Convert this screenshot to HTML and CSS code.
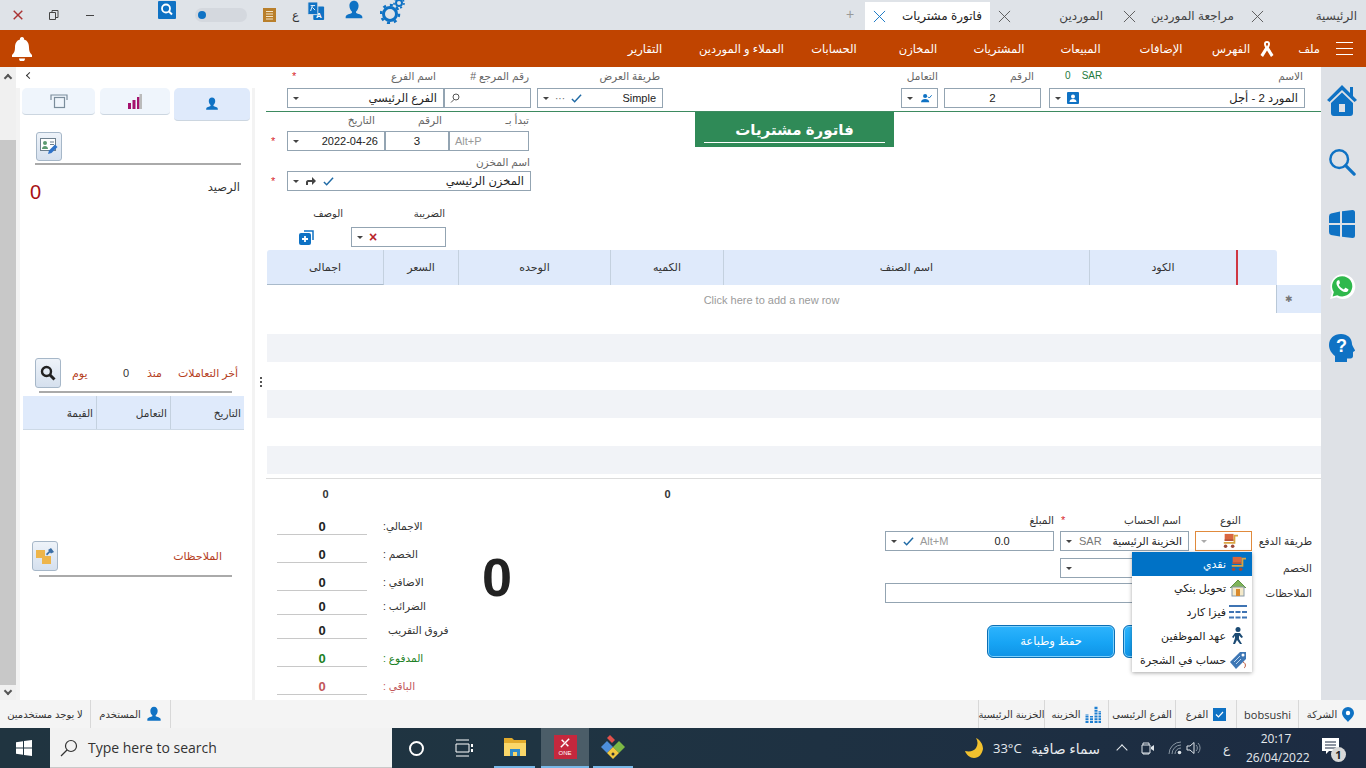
FILE: index.html
```html
<!DOCTYPE html>
<html lang="ar">
<head>
    <meta charset="UTF-8">
    <title>فاتورة مشتريات</title>
    <link rel="stylesheet" href="styles.css">
</head>
<body>
<svg class="defs">
    <symbol id="i-user" viewBox="0 0 24 24"><path d="M12 1c3.400 0 5.500 2.600 5.500 6 0 3-1.300 5.500-3 6.800v1.700c2 1.200 7 1.600 7.500 4.500v2H2v-2c.5-2.900 5.500-3.300 7.500-4.500v-1.700c-1.700-1.300-3-3.800-3-6.800 0-3.400 2.100-6 5.500-6z"/></symbol>
    <symbol id="i-check" viewBox="0 0 12 12"><path d="M1 6.500l3 3L11 2" fill="none" stroke="currentColor" stroke-width="1.600"/></symbol>
    <symbol id="i-x" viewBox="0 0 14 14"><path d="M1 1l12 12M13 1L1 13" fill="none" stroke="currentColor"/></symbol>
    <symbol id="i-cart" viewBox="0 0 20 18"><path fill="#d9663f" d="M4 1h10v8H4z"/><path fill="#b9543a" d="M4 7h10v2H4z"/><path fill="#d9a441" d="M14 2h5v2h-3v8H3v-2h11z"/><circle cx="5" cy="15" r="2" fill="#9c4a3a"/><circle cx="13" cy="15" r="2" fill="#9c4a3a"/></symbol>
</svg>

<!-- شريط التبويبات -->
<div class="titlebar">
    <div class="winbtn win-close"><svg width="10" height="10"><use href="#i-x"/></svg></div>
    <div class="winbtn"><svg width="10" height="10" viewBox="0 0 10 10"><path d="M3 2.500V.5h6v7H7M.5 2.500h6v7h-6z" fill="none" stroke="#444"/></svg></div>
    <div class="winbtn"><span class="win-min"></span></div>
    <svg class="t-search" width="18" height="18" viewBox="0 0 18 18"><rect width="18" height="18" rx="1" fill="#0f72c4"/><circle cx="8" cy="7.500" r="4" fill="none" stroke="#fff" stroke-width="1.800"/><path d="M11 10.500l3 3" stroke="#fff" stroke-width="2"/></svg>
    <div class="toggle"><span></span></div>
    <svg class="t-notes" width="13" height="14" viewBox="0 0 13 14"><rect width="13" height="14" fill="#b97f2b"/><path d="M3 3.500h7M3 6h7M3 8.500h7M3 11h7" stroke="#f3e4c6"/></svg>
    <span class="t-lang">ع</span>
    <svg class="t-trans" width="18" height="18" viewBox="0 0 18 20"><rect x="6" y="5" width="12" height="15" rx="1" fill="#0f72c4"/><rect width="11" height="14" rx="1" fill="#0f72c4" stroke="#dfe3e8"/><path d="M3 4h5M5 4l-2 6M5 6l3 3" stroke="#fff" fill="none"/><text x="9" y="18" class="t-trans-a">A</text></svg>
    <svg class="t-user" width="20" height="20"><use href="#i-user"/></svg>
    <svg class="t-gear" width="25" height="26" viewBox="0 0 25 26"><circle cx="10" cy="16" r="6.500" fill="none" stroke="#0f72c4" stroke-width="3"/><circle cx="10" cy="16" r="9" fill="none" stroke="#0f72c4" stroke-width="2.500" stroke-dasharray="3 4"/><circle cx="19" cy="5" r="3" fill="none" stroke="#0f72c4" stroke-width="2"/><circle cx="19" cy="5" r="5" fill="none" stroke="#0f72c4" stroke-width="1.600" stroke-dasharray="2 2.500"/></svg>

    <div class="tabs">
        <span class="tab-plus">+</span>
        <div class="tab tab-active"><svg class="tab-x" width="13" height="13"><use href="#i-x"/></svg><span>فاتورة مشتريات</span></div>
        <div class="tab tab-sup"><svg class="tab-x" width="13" height="13"><use href="#i-x"/></svg><span>الموردين</span></div>
        <div class="tab"><svg class="tab-x" width="13" height="13"><use href="#i-x"/></svg><span>مراجعة الموردين</span></div>
        <div class="tab tab-home"><svg class="tab-x" width="13" height="13"><use href="#i-x"/></svg><span>الرئيسية</span></div>
    </div>
</div>

<!-- القائمة -->
<div class="menubar">
    <svg class="bell" width="22" height="24" viewBox="0 0 22 24"><path fill="#fff" d="M11 0a2 2 0 0 1 2 2.500c3.600 1 5 4 5 8 0 4 1 5.500 3 7.500v2H1v-2c2-2 3-3.500 3-7.500 0-4 1.400-7 5-8A2 2 0 0 1 11 0zM8 21.500h6a3 3 0 0 1-6 0z"/></svg>
    <div class="menu">
        <span>التقارير</span>
        <span>العملاء و الموردين</span>
        <span>الحسابات</span>
        <span>المخازن</span>
        <span>المشتريات</span>
        <span>المبيعات</span>
        <span>الإضافات</span>
        <span>الفهرس</span>
        <svg width="14" height="18" viewBox="0 0 14 18"><path d="M7 1c2 0 3 1 3 3 0 1-.6 2.400-1.200 3.500L13.500 15l-2.500 2L7 10.500 3 17 .5 15l4.700-7.500C4.600 6.400 4 5 4 4c0-2 1-3 3-3zm0 2c-.8 0-1.100.5-1.100 1.100 0 .5.500 1.500 1.100 2.500.6-1 1.100-2 1.100-2.500C8.100 3.500 7.800 3 7 3z" fill="#fff"/></svg>
        <span class="m-file">ملف</span>
        <div class="burger"><i></i><i></i><i></i></div>
    </div>
</div>

<div class="main">
    <!-- الشريط الايسر -->
    <div class="scroller">
        <span class="sc-up"></span>
        <div class="sc-thumb"></div>
        <span class="sc-down"></span>
    </div>

    <div class="leftpanel">
        <div class="lp-top"><span class="lp-arrow"></span></div>
        <div class="lp-body">
            <div class="lp-tabs">
                <div class="lp-tab"><svg width="20" height="16" viewBox="0 0 20 16"><path d="M2 7V2h16v5" fill="none" stroke="#7b8d9c" stroke-width="1.200"/><rect x="5.500" y="4.500" width="10" height="10" fill="#eff5fc" stroke="#7b8d9c" stroke-width="1.200"/></svg></div>
                <div class="lp-tab lp-tab2"><svg width="16" height="15" viewBox="0 0 16 15"><path fill="#a5116e" d="M1 9h3v6H1zM5.500 6h3v9h-3zM10 3h2.500v12H10z"/><path fill="#bbb" d="M12.500 0H15v15h-2.500z"/></svg></div>
                <div class="lp-tab lp-tab-active"><svg width="14" height="14"><use href="#i-user"/></svg></div>
            </div>
            <div class="lp-btnrow">
                <div class="sq-btn"><svg width="18" height="17" viewBox="0 0 18 17"><rect x="0.500" y="0.500" width="15" height="12" fill="#fff" stroke="#6d7f8d"/><circle cx="5" cy="5" r="2" fill="#5c9a70"/><path fill="#5c9a70" d="M2 11c0-2 1.500-3 3-3s3 1 3 3z"/><path d="M10 4h4M10 6.500h4" stroke="#6d7f8d"/><path fill="#2f73c9" d="M8 16l1-3.500 6-6 2.500 2.500-6 6z"/></svg></div>
            </div>
            <div class="lp-line lp-line-wide"></div>
            <div class="balance">
                <span class="balance-val">0</span>
                <span class="balance-lbl">الرصيد</span>
            </div>
            <div class="recent">
                <div class="sq-btn sq-btn-tall"><svg width="16" height="16" viewBox="0 0 16 16"><circle cx="6.500" cy="6.500" r="4.500" fill="none" stroke="#222" stroke-width="2.400"/><path d="M10 10l4.500 4.500" stroke="#222" stroke-width="3"/></svg></div>
                <span class="rc-day">يوم</span>
                <span class="rc-num">0</span>
                <span class="rc-since">منذ</span>
                <span class="rc-title">أخر التعاملات</span>
            </div>
            <div class="lp-line"></div>
            <div class="rc-head">
                <div>القيمة</div>
                <div>التعامل</div>
                <div>التاريخ</div>
            </div>
            <div class="notes">
                <div class="sq-btn sq-btn-tall"><svg width="20" height="20" viewBox="0 0 20 20"><path fill="#eeb54a" d="M1 4h9v6h6v8H7v-6H1z"/><path fill="#3b6ea5" d="M11 8l3-3-1-1 3-2 3 4-3 1.500-1-1-3 3z"/></svg></div>
                <span class="notes-lbl">الملاحظات</span>
            </div>
            <div class="lp-line"></div>
        </div>
    </div>

    <div class="splitter"><span></span><span></span><span></span></div>

    <div class="center">
        <div class="top-form">
            <div class="field f-branch">
                <div class="lbl"><span class="star">*</span><span>اسم الفرع</span></div>
                <div class="inp"><span class="caret"></span><span class="val">الفرع الرئيسي</span></div>
            </div>
            <div class="field f-ref">
                <div class="lbl"><span></span><span dir="rtl">رقم المرجع #</span></div>
                <div class="inp"><svg width="10" height="10" viewBox="0 0 10 10"><circle cx="6" cy="4" r="3" fill="none" stroke="#555"/><path d="M4 6.500L1 9.500" stroke="#555"/></svg></div>
            </div>
            <div class="field f-view">
                <div class="lbl"><span></span><span>طريقة العرض</span></div>
                <div class="inp"><span class="caret"></span><span class="dots">···</span><svg class="chk" width="11" height="11"><use href="#i-check"/></svg><span class="val val-en">Simple</span></div>
            </div>
            <div class="field f-trans">
                <div class="lbl"><span></span><span>التعامل</span></div>
                <div class="inp"><span class="caret"></span><svg class="i-blue" width="16" height="14" viewBox="0 0 16 14"><circle cx="6" cy="4" r="3"/><path d="M0 13c0-3 3-4.500 6-4.500s6 1.500 6 4.500z"/><path d="M10 5l2 2 3.500-4" fill="none" stroke="#0f72c4" stroke-width="1.400"/></svg></div>
            </div>
            <div class="field f-num">
                <div class="lbl"><span></span><span>الرقم</span></div>
                <div class="inp inp-center">2</div>
            </div>
            <div class="field f-supplier">
                <div class="lbl"><span class="sar">0 &nbsp;&nbsp; SAR</span><span>الاسم</span></div>
                <div class="inp"><span class="caret"></span><svg width="12" height="12" viewBox="0 0 12 12"><rect width="12" height="12" rx="1" fill="#0f72c4"/><circle cx="6" cy="4.500" r="2" fill="#fff"/><path d="M2.500 10c0-2 1.500-3 3.500-3s3.500 1 3.500 3z" fill="#fff"/></svg><span class="val">المورد 2 - أجل</span></div>
            </div>
        </div>

        <div class="mid">
            <div class="mid-form">
                <div class="m-row m-labels">
                    <span class="m-lbl m-date">التاريخ</span>
                    <span class="m-lbl m-num">الرقم</span>
                    <span class="m-lbl m-prefix">تبدأ بـ</span>
                </div>
                <div class="m-row">
                    <span class="star m-star">*</span>
                    <div class="inp m-date-in"><span class="caret"></span><span class="val val-en">2022-04-26</span></div>
                    <div class="inp inp-center m-num-in">3</div>
                    <div class="inp m-prefix-in"><span class="hint">Alt+P</span></div>
                </div>
                <div class="m-store-lbl">اسم المخزن</div>
                <div class="m-row">
                    <span class="star m-star">*</span>
                    <div class="inp m-store-in"><span class="caret"></span><svg class="arrow" width="12" height="10" viewBox="0 0 12 10"><path d="M1 9V6c0-1 1-2 2-2h4V1l4 4-4 4V6H3.500C3 6 3 6.500 3 7v2z" fill="#444"/></svg><svg class="chk" width="11" height="11"><use href="#i-check"/></svg><span class="val">المخزن الرئيسي</span></div>
                </div>
                <div class="m-row m-labels2">
                    <span class="m-desc">الوصف</span>
                    <span class="m-tax">الضريبة</span>
                </div>
                <div class="m-row m-taxrow">
                    <svg width="15" height="15" viewBox="0 0 15 15"><path d="M5 1h9v9" fill="none" stroke="#0f72c4" stroke-width="1.500"/><rect y="3" width="12" height="12" rx="2" fill="#0f72c4"/><path d="M3 9h6M6 6v6" stroke="#fff" stroke-width="1.800"/></svg>
                    <div class="inp m-tax-in"><span class="caret"></span><span class="red-x">×</span></div>
                </div>
            </div>
            <div class="doc-title"><span>فاتورة مشتريات</span></div>
        </div>

        <div class="grid-head">
            <div class="gh-first">اجمالى</div>
            <div>السعر</div>
            <div>الوحده</div>
            <div>الكميه</div>
            <div>اسم الصنف</div>
            <div class="gh-code">الكود</div>
            <div class="gh-red"></div>
        </div>
        <div class="grid-new">
            <div class="new-text">Click here to add a new row</div>
            <div class="new-head">✱</div>
        </div>
        <div class="grid-rows">
            <div class="g-row g-gap"></div>
            <div class="g-row g-alt"></div>
            <div class="g-row"></div>
            <div class="g-row g-alt"></div>
            <div class="g-row"></div>
            <div class="g-row g-alt"></div>
        </div>
        <div class="sums">
            <div>0</div><div></div><div></div><div>0</div><div></div><div></div><div></div>
        </div>

        <div class="bottom">
            <div class="totals">
                <div class="t-row"><div class="t-val">0</div><div class="t-lbl">الاجمالي:</div></div>
                <div class="t-row"><div class="t-val">0</div><div class="t-lbl">الخصم :</div></div>
                <div class="t-row"><div class="t-val">0</div><div class="t-lbl">الاضافي :</div></div>
                <div class="t-row t-short"><div class="t-val">0</div><div class="t-lbl">الضرائب :</div></div>
                <div class="t-row t-short"><div class="t-val">0</div><div class="t-lbl t-round">فروق التقريب</div></div>
                <div class="t-row t-paid"><div class="t-val">0</div><div class="t-lbl">المدفوع :</div></div>
                <div class="t-row t-rest"><div class="t-val">0</div><div class="t-lbl">الباقي :</div></div>
            </div>
            <div class="big-zero">0</div>
            <div class="pay">
                <div class="pay-grid">
                    <div class="p-lbl"><span></span><span>المبلغ</span></div>
                    <div class="p-lbl p-lbl-acc"><span class="star">*</span><span>اسم الحساب</span></div>
                    <div class="p-lbl p-lbl-type"><span></span><span>النوع</span></div>
                    <div></div>
                    <div class="inp"><span class="caret"></span><svg class="chk" width="11" height="11"><use href="#i-check"/></svg><span class="hint">Alt+M</span><span class="val val-en p-amt">0.0</span></div>
                    <div class="inp"><span class="caret"></span><span class="hint hint-sar">SAR</span><span class="val val-acc">الخزينة الرئيسية</span></div>
                    <div class="inp inp-type"><span class="caret caret-pale"></span><svg class="type-cart" width="18" height="16"><use href="#i-cart"/></svg></div>
                    <div class="row-lbl">طريقة الدفع</div>
                    <div class="p-empty"></div>
                    <div class="inp p-span2"><span class="caret"></span></div>
                    <div class="row-lbl row-lbl2">الخصم</div>
                    <div class="inp p-span3"></div>
                    <div class="row-lbl row-lbl3">الملاحظات</div>
                </div>
                <div class="pay-btns">
                    <div class="blue-btn">حفظ وطباعة</div>
                    <div class="blue-btn"></div>
                </div>
                <div class="pay-menu">
                    <div class="pm-item pm-sel">نقدي<svg width="18" height="16"><use href="#i-cart"/></svg></div>
                    <div class="pm-item">تحويل بنكي<svg width="18" height="18" viewBox="0 0 18 18"><path d="M1 9l8-8 8 8" fill="#7fb35a" stroke="#5f9440"/><rect x="3" y="8" width="12" height="9" fill="#f4e9c9" stroke="#8a9aa8"/><rect x="7" y="10" width="4" height="7" fill="#d98a2c"/></svg></div>
                    <div class="pm-item">فيزا كارد<svg width="18" height="14" viewBox="0 0 18 14"><path d="M0 1h18" stroke="#3f74b3" stroke-width="2"/><path d="M0 7h18M0 12.500h18" stroke="#3f74b3" stroke-width="2" stroke-dasharray="5 1.500"/></svg></div>
                    <div class="pm-item">عهد الموظفين<svg width="18" height="18" viewBox="0 0 18 18"><circle cx="9" cy="2.500" r="2.500" fill="#1b4a73"/><path fill="#1b4a73" d="M6 6h5l3 4-1.500 1L10 8.500V12l3 5h-2l-3-4-2 4H4l2-6V8.500L4.500 11 3 10z"/></svg></div>
                    <div class="pm-item">حساب في الشجرة<svg width="18" height="18" viewBox="0 0 18 18"><path fill="#3e77b5" d="M1 11L11 1h6v7L7 18z"/><circle cx="14" cy="4" r="1.500" fill="#fff"/><path d="M5 11l6-6M7 13l5-5" stroke="#bcd6ef"/><path d="M14 11c3 1 3 5 1 6" fill="none" stroke="#b9543a"/></svg></div>
                </div>
            </div>
        </div>
    </div>

    <!-- الشريط الايمن -->
    <div class="sidebar">
        <div><svg width="32" height="32" viewBox="0 0 32 32"><path fill="#0f72c4" d="M16 1L1 16l2.500 2L16 6l12.500 12 2.500-2-4-4V3h-3v6z"/><path fill="#0f72c4" fill-rule="evenodd" d="M5 19L16 8.500 27 19v10c0 2-1 3-3 3H8c-2 0-3-1-3-3zm8 1v8h6v-8z"/></svg></div>
        <div><svg width="28" height="28" viewBox="0 0 30 30"><circle cx="12" cy="12" r="9.500" fill="none" stroke="#0f72c4" stroke-width="2.600"/><path d="M19 19l9 9" stroke="#0f72c4" stroke-width="3.400" stroke-linecap="round"/></svg></div>
        <div><svg width="26" height="28" viewBox="0 0 26 28"><path fill="#0f72c4" d="M0 6.500Q0 4 2 3.500L11 1.500V13H0zM13 1.300L23.500 0Q26 0 26 2.500V13H13zM0 15h11v11.500L2 25Q0 24.500 0 22zM13 15h13v10.500q0 2.500-2.500 2.500L13 26.700z"/></svg></div>
        <div><svg width="27" height="27" viewBox="0 0 24 24"><path fill="#fff" d="M1 23l1.600-5.800A11 11 0 1 1 6.800 21.600z"/><path fill="#2fb84c" d="M3.200 20.800l1.100-3.900A9 9 0 1 1 7.400 19.700z"/><path fill="#fff" d="M8.500 6.500c-.5 0-1.200.4-1.600 1.100-.6 1.300-.3 3.200 1.400 5.400 1.900 2.400 4.100 3.700 6 3.900 1.300.1 2.300-.5 2.800-1.400.2-.4.2-1 .1-1.100l-2.400-1.200c-.2-.1-.4 0-.5.100l-.9 1.100c-.1.200-.3.200-.5.100-1.800-.8-3.200-2.100-4.100-3.900-.1-.2 0-.4.100-.5l.7-.8c.1-.2.200-.4.100-.6L9.300 6.800c-.1-.2-.4-.3-.8-.3z"/></svg></div>
        <div><svg width="26" height="28" viewBox="0 0 26 28"><path fill="#0f72c4" d="M12 0c6.500 0 11 4.200 11 10 0 1.500 3 5.500 3 6.500 0 .8-1.500 1-2 1.500v4c0 1.500-1 2.500-2.500 2.500H18V28H6v-6c-3.500-2.500-6-6.500-6-11C0 4.500 5 0 12 0z"/><text x="7" y="18" class="help-q">?</text></svg></div>
    </div>
</div>

<!-- شريط الحالة -->
<div class="statusbar">
    <div class="st-left">
        <div class="st-cell">لا يوجد مستخدمين</div>
        <div class="st-cell">المستخدم<svg width="16" height="16"><use href="#i-user"/></svg></div>
    </div>
    <div class="st-right">
        <div class="st-cell">الخزينة الرئيسية</div>
        <div class="st-cell">الخزينه<svg width="16" height="18" viewBox="0 0 16 18"><path d="M2 18V9M6.500 18V11M11 18V1M15 18V6" stroke="#1d7fd1" stroke-width="3" stroke-dasharray="2 .8"/></svg></div>
        <div class="st-cell">الفرع الرئيسى</div>
        <div class="st-cell">الفرع<svg width="13" height="13" viewBox="0 0 13 13"><rect width="13" height="13" fill="#0f72c4"/><path d="M3 6.500l2.500 2.500L10 4" stroke="#fff" stroke-width="1.200" fill="none"/></svg></div>
        <div class="st-cell st-en">bobsushi</div>
        <div class="st-cell st-company">الشركة<svg width="12" height="15" viewBox="0 0 12 15"><path fill="#0f72c4" d="M6 0a6 6 0 0 1 6 6c0 3.500-4 6.500-6 9-2-2.500-6-5.500-6-9a6 6 0 0 1 6-6z"/><circle cx="6" cy="6" r="2.200" fill="#fff"/></svg></div>
    </div>
</div>

<!-- شريط المهام -->
<div class="taskbar">
    <svg class="tb-win" width="16" height="16" viewBox="0 0 16 16"><path fill="#fff" d="M0 2.200L7 1.200V7.500H0zM8 1L16 0V7.500H8zM0 8.500h7v6.300l-7-1zM8 8.500h8V16l-8-1.100z"/></svg>
    <div class="tb-search">
        <svg width="18" height="18" viewBox="0 0 18 18"><circle cx="11" cy="7" r="5.500" fill="none" stroke="#333" stroke-width="1.200"/><path d="M7 11l-6 6" stroke="#333" stroke-width="1.200"/></svg>
        <span>Type here to search</span>
    </div>
    <div class="tb-apps">
        <div class="tb-app"><span class="cortana"></span></div>
        <div class="tb-app"><svg width="18" height="18" viewBox="0 0 18 18"><path d="M1 1h13M1 17h13M1 5h13v8H1z" fill="none" stroke="#fff"/><path d="M16 5h2v3h-2zM16 10h2v3h-2z" fill="#fff"/></svg></div>
        <div class="tb-app tb-open"><svg width="24" height="22" viewBox="0 0 24 22"><path fill="#e2ab2c" d="M1 2h8l2 2h12v16H1z"/><path fill="#fad769" d="M1 7h22v13H1z"/><path fill="#2f8ac9" d="M7 13h10v7h-3v-4h-4v4H7z"/></svg></div>
        <div class="tb-app tb-open tb-active"><div class="one-ico"><svg width="10" height="10" viewBox="0 0 12 12"><path d="M1 11L11 1M2 2l3 3M7 7l3 3" stroke="#fff" stroke-width="1.800"/></svg><span>ONE</span></div></div>
        <div class="tb-app tb-open tb-diamond"><svg width="24" height="24" viewBox="0 0 24 24"><path fill="#e2504b" d="M6 3l3-3 5 5-3 3z"/><path fill="#4d8fdc" d="M0 12l6-6 6 6-6 6z"/><path fill="#7db945" d="M12 12l6-6 6 6-6 6z"/><path fill="#f1c83f" d="M6 18l6-6 6 6-6 6z"/><circle cx="12" cy="19" r="1.500" fill="#333"/></svg></div>
    </div>
    <div class="tb-tray">
        <svg width="20" height="20" viewBox="0 0 20 20"><path fill="#f2c12e" d="M12 0c2 3 2 7 0 10-2 3-6 4-11 3 1.500 4 5 7 9 7 5 0 8-4 9-9 0-5-3-9-7-11z"/></svg>
        <span class="tr-temp">33°C</span>
        <span class="tr-sky">سماء صافية</span>
        <span class="tr-chev"></span>
        <svg class="tr-meet" width="14" height="18" viewBox="0 0 14 18"><path d="M2 6V4h6v2M2 14v1h6v-1M1 6h8v8H1z" fill="none" stroke="#dfe5ea"/><path d="M10 8l3-2v6l-3-2z" fill="#dfe5ea"/></svg>
        <svg class="tr-wifi" width="14" height="14" viewBox="0 0 14 14"><path d="M1 13A12 12 0 0 1 13 1M4 13a9 9 0 0 1 9-9M7 13a6 6 0 0 1 6-6" fill="none" stroke="#8a97a3"/><circle cx="11.500" cy="11.500" r="1.800" fill="#dfe5ea"/></svg>
        <svg class="tr-vol" width="16" height="14" viewBox="0 0 16 14"><path d="M1 5h3l4-3.500v11L4 9H1z" fill="none" stroke="#dfe5ea"/><path d="M10 4a4 4 0 0 1 0 6M12 2a7 7 0 0 1 0 10" fill="none" stroke="#8a97a3"/></svg>
        <span class="tr-lang">ع</span>
        <div class="tr-clock"><div>20:17</div><div>26/04/2022</div></div>
        <div class="tr-note">
            <svg width="17" height="16" viewBox="0 0 17 16"><path fill="#fff" d="M0 0h17v13H7l-3 3v-3H0z"/><path d="M3 4h11M3 7h11M3 10h11" stroke="#1c2b42"/></svg>
            <span class="tr-badge">1</span>
        </div>
    </div>
</div>
</body>
</html>
```

FILE: styles.css
```css
* {
    box-sizing: border-box;
}

html, body {
    margin: 0;
    height: 768px;
    overflow: hidden;
}

body {
    display: flex;
    flex-direction: column;
    font-family: "Liberation Sans", "DejaVu Sans", sans-serif;
    font-size: 11px;
    color: #333;
    background: #fff;
}

.defs {
    display: none;
}

/* شريط التبويبات */
.titlebar {
    height: 30px;
    flex: none;
    display: flex;
    align-items: center;
    background: #dfe3e8;
}

.winbtn {
    width: 36px;
    height: 30px;
    display: flex;
    align-items: center;
    justify-content: center;
}

.win-close {
    color: #a33;
    stroke-width: 2;
}

.win-min {
    width: 8px;
    border-top: 1px solid #444;
}

.t-search {
    margin: -10px 0 0 50px;
}

.toggle {
    width: 52px;
    height: 14px;
    margin: 0 0 0 19px;
    padding-left: 3px;
    display: flex;
    align-items: center;
    background: #d4d8de;
    border-radius: 8px;
}

.toggle span {
    width: 8px;
    height: 8px;
    border-radius: 50%;
    background: #0f72c4;
}

.t-notes {
    margin-left: 16px;
}

.t-lang {
    margin-left: 16px;
    font-size: 12px;
}

.t-trans {
    margin: -8px 0 0 8px;
}

.t-trans-a {
    font-size: 9px;
    font-weight: bold;
    fill: #fff;
}

.t-user {
    margin: -10px 0 0 19px;
    fill: #0f72c4;
}

.t-gear {
    margin: -8px 0 0 16px;
}

.tabs {
    margin-left: auto;
    display: flex;
    align-items: flex-end;
    height: 30px;
}

.tab-plus {
    width: 30px;
    height: 30px;
    font-size: 14px;
    line-height: 28px;
    color: #999;
    text-align: center;
}

.tab {
    width: 128px;
    height: 28px;
    padding: 0 9px 0 8px;
    display: flex;
    align-items: center;
    justify-content: space-between;
    font-size: 12px;
    color: #444;
}

.tab-sup {
    width: 125px;
    padding-right: 12px;
}

.tab-home {
    width: 123px;
}

.tab-active {
    width: 125px;
    padding-right: 8px;
    background: #fff;
    color: #222;
}

.tab-x {
    flex: none;
    color: #555;
}

.tab-active .tab-x {
    color: #0f72c4;
}

/* القائمة */
.menubar {
    height: 37px;
    flex: none;
    display: flex;
    align-items: center;
    padding-left: 11px;
    background: #c04400;
    color: #fff;
}

.menu {
    margin-left: auto;
    display: grid;
    grid-template-columns: 96px 97px 88px 80px 82px 81px 80px 60px 12px 60px 33px;
    align-items: center;
    justify-items: center;
    font-size: 11.500px;
}

.m-file {
    justify-self: end;
    margin-right: 13px;
}

.burger {
    width: 17px;
    justify-self: start;
    margin-left: 3px;
}

.burger i {
    display: block;
    height: 1px;
    margin: 5px 0;
    background: #fff;
}

.main {
    flex: 1;
    min-height: 0;
    display: flex;
}

/* الشريط الايسر */
.scroller {
    width: 16px;
    display: flex;
    flex-direction: column;
    align-items: center;
    background: #f0f0f0;
}

.sc-up, .sc-down {
    width: 6px;
    height: 6px;
    border-left: 2px solid #555;
    border-top: 2px solid #555;
    transform: rotate(45deg);
    margin-top: 8px;
}

.sc-down {
    transform: rotate(225deg);
    margin-top: 3px;
}

.sc-thumb {
    width: 16px;
    height: 545px;
    margin-top: 59px;
    background: #c8c8c8;
}

.leftpanel {
    width: 239px;
    display: flex;
    flex-direction: column;
}

.lp-top {
    height: 21px;
    padding: 6px 0 0 11px;
}

.lp-arrow {
    display: block;
    width: 5px;
    height: 5px;
    border-left: 1.500px solid #333;
    border-bottom: 1.500px solid #333;
    transform: rotate(45deg);
}

.lp-body {
    flex: 1;
    min-height: 0;
    border-left: 4px solid #f3f3f3;
    border-right: 3px solid #f3f3f3;
}

.lp-tabs {
    display: flex;
    align-items: flex-start;
    padding-left: 2px;
    gap: 5px;
}

.lp-tab {
    width: 73px;
    height: 27px;
    display: flex;
    align-items: center;
    justify-content: center;
    background: #eff5fc;
    border-bottom: 1.500px solid #ccd6e0;
    border-radius: 5px 5px 4px 4px;
}

.lp-tab2 {
    width: 70px;
    margin-right: -1px;
}

.lp-tab-active {
    width: 76px;
    height: 33px;
    background: #dfeafb;
    fill: #0f72c4;
}

.lp-btnrow {
    padding: 11px 0 0 16px;
}

.sq-btn {
    width: 26px;
    height: 29px;
    display: flex;
    align-items: center;
    justify-content: center;
    background: linear-gradient(#eef3f9, #d5e0ee);
    border: 1px solid #a6b7c8;
    border-radius: 3px;
}

.sq-btn-tall {
    height: 30px;
    flex: none;
}

.lp-line {
    width: 193px;
    height: 2px;
    margin-left: 19px;
    background: #aaa;
}

.lp-line-wide {
    width: 206px;
    margin: 2px 0 0 15px;
}

.balance {
    height: 193px;
    display: flex;
    justify-content: space-between;
    align-items: flex-start;
    padding: 16px 12px 0 10px;
}

.balance-val {
    font-size: 20px;
    color: #a80f14;
}

.balance-lbl {
    margin-top: -1px;
    font-size: 11.500px;
}

.recent {
    height: 33px;
    display: flex;
    align-items: flex-start;
    padding-left: 15px;
    font-size: 11px;
    line-height: 30px;
    color: #b5401d;
}

.rc-day {
    margin-left: 11px;
    width: 20px;
}

.rc-num {
    margin-left: 31px;
    width: 8px;
    color: #333;
}

.rc-since {
    margin-left: 16px;
}

.rc-title {
    margin-left: 16px;
}

.rc-head {
    width: 221px;
    height: 34px;
    margin: 3px 0 0 3px;
    display: grid;
    grid-template-columns: 74px 74px 73px;
    background: #dfeafb;
    border-bottom: 1px solid #cdd9e6;
    font-size: 10.500px;
}

.rc-head div {
    display: flex;
    align-items: center;
    justify-content: flex-end;
    padding-right: 3px;
    border-right: 1px solid #c4d1df;
}

.rc-head div:last-child {
    border-right: 0;
}

.notes {
    margin: 111px 0 4px 12px;
    display: flex;
    align-items: center;
    color: #b5401d;
    font-size: 11px;
}

.notes-lbl {
    margin-left: auto;
    margin-right: 30px;
}

.splitter {
    width: 11px;
    display: flex;
    flex-direction: column;
    align-items: center;
    justify-content: center;
    gap: 2px;
    padding-bottom: 4px;
}

.splitter span {
    width: 2px;
    height: 2px;
    background: #555;
}

/* الوسط */
.center {
    width: 1055px;
    display: flex;
    flex-direction: column;
}

.top-form {
    height: 45px;
    padding: 3px 0 0 21px;
    display: flex;
    border-bottom: 1px solid #3d8a60;
}

.field {
    flex: none;
}

.lbl {
    height: 12px;
    margin-bottom: 6px;
    display: flex;
    justify-content: space-between;
    font-size: 10.500px;
    line-height: 12px;
    color: #666;
}

.star {
    color: #d8262c;
    font-size: 11px;
}

.sar {
    padding-left: 16px;
    color: #1e7a3c;
    font-size: 10px;
}

.inp {
    height: 20px;
    display: flex;
    align-items: center;
    padding: 0 5px;
    background: #fff;
    border: 1px solid #93a4b2;
    font-size: 11.500px;
    color: #222;
    white-space: nowrap;
}

.inp-center {
    justify-content: center;
}

.val {
    margin-left: auto;
    padding-right: 1px;
}

.val-en {
    font-size: 11px;
}

.val-acc {
    font-size: 10.500px;
}

.hint {
    color: #999;
    font-size: 11px;
}

.hint-sar {
    margin-left: 1px;
    color: #777;
}

.caret {
    width: 0;
    height: 0;
    margin-right: 6px;
    border-left: 3px solid transparent;
    border-right: 3px solid transparent;
    border-top: 3px solid #444;
    flex: none;
}

.caret-pale {
    border-top-color: #aaa;
}

.chk {
    color: #1f6aa5;
    margin-right: 6px;
    flex: none;
}

.dots {
    margin-right: 6px;
    color: #666;
    font-size: 10px;
}

.f-branch { width: 157px; }
.f-branch .lbl { padding: 0 8px 0 5px; }
.f-ref { width: 87px; margin-right: 6px; }
.f-ref .lbl { padding-right: 2px; }
.f-view { width: 126px; margin-right: 238px; }
.f-view .lbl { padding-right: 3px; }
.f-trans { width: 37px; margin-right: 6px; }
.f-trans .lbl span:last-child { margin-left: 3px; white-space: nowrap; }
.f-num { width: 97px; margin-right: 8px; }
.f-num .lbl { padding-right: 7px; }
.f-supplier { width: 256px; }
.f-supplier .lbl { padding-right: 2px; }

.i-blue {
    margin-left: 2px;
    fill: #0f72c4;
}

.mid {
    height: 138px;
    display: flex;
    align-items: flex-start;
    padding-left: 5px;
}

.mid-form {
    width: 260px;
    flex: none;
}

.m-row {
    display: flex;
    align-items: center;
}

.m-labels {
    height: 12px;
    margin: 2px 0 5px;
    color: #666;
    font-size: 10.500px;
    line-height: 12px;
}

.m-lbl {
    text-align: right;
}

.m-date { width: 95px; margin-left: 9px; }
.m-num { width: 67px; }
.m-prefix { width: 87px; }

.m-star {
    width: 16px;
    flex: none;
}

.m-date-in { width: 98px; }
.m-num-in { width: 64px; }
.m-prefix-in { width: 80px; }

.m-store-lbl {
    height: 12px;
    margin: 5px 0 3px;
    padding-right: 1px;
    text-align: right;
    color: #666;
    font-size: 10.500px;
    line-height: 12px;
}

.m-store-in { width: 244px; }

.arrow {
    margin-right: 6px;
    flex: none;
}

.m-labels2 {
    height: 12px;
    margin: 17px 0 7px;
    font-size: 10px;
    line-height: 12px;
}

.m-desc {
    width: 44px;
    margin-left: 28px;
    text-align: right;
}

.m-tax {
    width: 102px;
    text-align: right;
}

.m-taxrow {
    padding-left: 28px;
}

.m-tax-in {
    width: 95px;
    margin-left: 37px;
}

.red-x {
    color: #b8232a;
    font-size: 14px;
    font-weight: bold;
    line-height: 14px;
}

.doc-title {
    width: 199px;
    height: 35px;
    margin-left: 164px;
    padding: 0 9px;
    display: flex;
    background: #2f8a57;
    color: #fff;
    font-size: 15px;
    font-weight: bold;
}

.doc-title span {
    flex: 1;
    height: 31px;
    line-height: 36px;
    text-align: center;
    border-bottom: 1px solid #fff;
}

.grid-head, .sums {
    width: 1010px;
    margin-left: 1px;
    display: grid;
    grid-template-columns: 117px 75px 152px 113px 366px 146px 41px;
}

.grid-head {
    height: 35px;
    flex: none;
    background: #dfeafb;
    border-radius: 3px 3px 0 0;
    font-size: 11px;
}

.grid-head div {
    display: flex;
    align-items: center;
    justify-content: center;
    border-right: 1px solid #c4d1df;
}

.grid-head .gh-first {
    border-bottom: 1px solid #a9bacb;
}

.grid-head .gh-code {
    border-right: 0;
}

.grid-head .gh-red {
    border-right: 0;
    border-left: 2px solid #cf3743;
}

.grid-new {
    height: 28px;
    flex: none;
    margin-left: 1px;
    display: flex;
}

.new-text {
    flex: 1;
    text-align: center;
    line-height: 30px;
    color: #9b9b9b;
    font-size: 11px;
}

.new-head {
    width: 45px;
    padding-left: 8px;
    line-height: 28px;
    font-size: 9px;
    color: #777;
    background: #dfeafb;
    border-left: 1px solid #b9c8d8;
}

.g-row {
    height: 28px;
    margin-left: 1px;
}

.g-gap {
    height: 21px;
}

.g-alt {
    background: #f1f3f7;
}

.grid-rows {
    height: 166px;
    flex: none;
    border-bottom: 1px solid #dcdcdc;
}

.sums {
    height: 28px;
    font-weight: bold;
    line-height: 31px;
    text-align: center;
}

.bottom {
    flex: 1;
    min-height: 0;
    display: flex;
    align-items: flex-start;
}

.totals {
    width: 179px;
    flex: none;
    padding-left: 11px;
}

.t-row {
    height: 28px;
    display: flex;
    align-items: flex-end;
}

.t-short {
    height: 24px;
}

.t-val {
    width: 90px;
    flex: none;
    text-align: center;
    border-bottom: 1px solid #c8c8c8;
    font-size: 13px;
    font-weight: bold;
    color: #222;
}

.t-lbl {
    margin: 0 0 3px 16px;
    direction: rtl;
    font-size: 10.500px;
    white-space: nowrap;
}

.t-round {
    margin-left: 21px;
}

.t-paid { color: #1c7f25; }
.t-paid .t-val { color: #1c7f25; }
.t-rest { color: #c2575a; }
.t-rest .t-val { color: #c2575a; }

.big-zero {
    width: 60px;
    margin: 40px 0 0 22px;
    font-size: 54px;
    font-weight: bold;
    line-height: 60px;
    color: #222;
    text-align: center;
}

.pay {
    width: 436px;
    margin-left: auto;
    position: relative;
}

.pay-grid {
    display: grid;
    grid-template-columns: 169px 129px 57px 1fr;
    column-gap: 6px;
    padding-top: 7px;
}

.p-lbl {
    height: 12px;
    margin-bottom: 5px;
    display: flex;
    justify-content: space-between;
    font-size: 10.500px;
    line-height: 12px;
}

.p-lbl-acc { padding-right: 8px; margin-left: 1px; }
.p-lbl-type { padding-right: 11px; }

.row-lbl {
    height: 20px;
    padding-right: 9px;
    direction: rtl;
    font-size: 10.500px;
    line-height: 20px;
    white-space: nowrap;
}

.p-span2, .p-empty, .row-lbl2 {
    margin-top: 7px;
}

.p-span2 {
    grid-column: span 2;
}

.p-span3 {
    grid-column: span 3;
}

.p-span3, .row-lbl3 {
    margin-top: 5px;
}

.p-amt {
    margin-left: 46px;
    margin-right: 8px;
}

.inp-type {
    border-color: #e08a3c;
    padding-right: 12px;
    justify-content: space-between;
}

.type-cart {
    flex: none;
}

.pay-btns {
    display: flex;
    gap: 8px;
    margin-top: 22px;
    padding-left: 102px;
}

.blue-btn {
    width: 128px;
    height: 33px;
    line-height: 31px;
    text-align: center;
    color: #fff;
    font-size: 11.500px;
    border: 1px solid #0b6fb5;
    border-radius: 6px;
    box-shadow: inset 0 0 0 1px #7fd0fb;
    background: linear-gradient(#2db4fd, #17a4f4 55%, #0f93e6);
}

.pay-menu {
    position: absolute;
    left: 247px;
    top: 45px;
    width: 120px;
    height: 120px;
    background: #fff;
    box-shadow: 0 1px 4px rgba(0, 0, 0, .35);
}

.pm-item {
    height: 24px;
    display: flex;
    align-items: center;
    justify-content: flex-end;
    gap: 3px;
    padding-right: 5px;
    font-size: 11px;
    color: #222;
}

.pm-sel {
    background: #0072c6;
    color: #fff;
}

/* الشريط الايمن */
.sidebar {
    width: 45px;
    padding: 2px 3px 0 0;
    background: #dee1e6;
}

.sidebar div {
    height: 62px;
    display: flex;
    align-items: center;
    justify-content: center;
}

.help-q {
    font-size: 18px;
    font-weight: bold;
    fill: #fff;
}

/* شريط الحالة */
.statusbar {
    height: 28px;
    flex: none;
    display: flex;
    justify-content: space-between;
    background: #f4f4f4;
    font-size: 10px;
}

.st-left {
    display: grid;
    grid-template-columns: 91px 80px;
    fill: #0f72c4;
}

.st-right {
    display: grid;
    grid-template-columns: 66px 64px 67px 61px 62px 67px;
    margin-right: 1px;
}

.st-cell {
    display: flex;
    align-items: center;
    justify-content: center;
    gap: 5px;
    border-right: 1px solid #d8d8d8;
    white-space: nowrap;
}

.st-right .st-cell {
    border-right: 0;
    border-left: 1px solid #d8d8d8;
}

.st-right .st-company {
    padding-right: 3px;
}

.st-en {
    font-family: "Open Sans", sans-serif;
    font-size: 11px;
}

/* شريط المهام */
.taskbar {
    height: 40px;
    flex: none;
    display: flex;
    align-items: center;
    background: linear-gradient(90deg, #203440, #1f3442 40%, #1c2b42);
    color: #e6eaee;
}

.tb-win {
    margin: 0 18px 0 16px;
}

.tb-search {
    width: 342px;
    height: 40px;
    display: flex;
    align-items: center;
    gap: 10px;
    padding-left: 10px;
    background: #f2f2f2;
    border-bottom: 1px solid #c9c9c9;
    color: #333;
    font-family: "Open Sans", sans-serif;
    font-size: 14px;
}

.tb-apps {
    display: grid;
    grid-template-columns: 48px 48px 53px 48px 48px;
    height: 40px;
}

.tb-app {
    display: flex;
    align-items: center;
    justify-content: center;
}

.tb-open {
    margin: 0 6px;
    border-bottom: 2px solid #78b8e8;
}

.tb-active {
    margin: 0;
    background: #4b5d68;
}

.tb-diamond {
    margin: 0 4px;
}

.cortana {
    width: 15px;
    height: 15px;
    border: 2px solid #fff;
    border-radius: 50%;
}

.one-ico {
    width: 23px;
    height: 24px;
    display: flex;
    flex-direction: column;
    align-items: center;
    justify-content: center;
    gap: 2px;
    background: #c5283d;
    color: #fff;
    font-size: 6px;
}

.tb-tray {
    margin-left: auto;
    height: 40px;
    display: flex;
    align-items: center;
    font-family: "Open Sans", "DejaVu Sans", sans-serif;
    font-size: 13px;
}

.tr-temp {
    width: 29px;
    margin-left: 9px;
    white-space: nowrap;
}

.tr-sky {
    width: 68px;
    margin-left: 9px;
    font-size: 14px;
    text-align: center;
    white-space: nowrap;
}

.tr-chev {
    width: 8px;
    height: 8px;
    margin: 4px 15px 0 19px;
    border-left: 1.500px solid #e6eaee;
    border-top: 1.500px solid #e6eaee;
    transform: rotate(45deg);
}

.tr-wifi {
    margin-left: 13px;
}

.tr-vol {
    margin-left: 4px;
}

.tr-lang {
    width: 7px;
    margin-left: 21px;
    font-size: 12px;
}

.tr-clock {
    width: 60px;
    margin-left: 16px;
    text-align: center;
    font-size: 12px;
    line-height: 19px;
}

.tr-note {
    width: 60px;
    height: 40px;
    padding: 10px 0 0 16px;
    position: relative;
}

.tr-badge {
    position: absolute;
    left: 25px;
    top: 19px;
    width: 15px;
    height: 15px;
    border-radius: 50%;
    background: #d8d8d8;
    color: #222;
    font-size: 11px;
    font-weight: bold;
    line-height: 15px;
    text-align: center;
}
```
